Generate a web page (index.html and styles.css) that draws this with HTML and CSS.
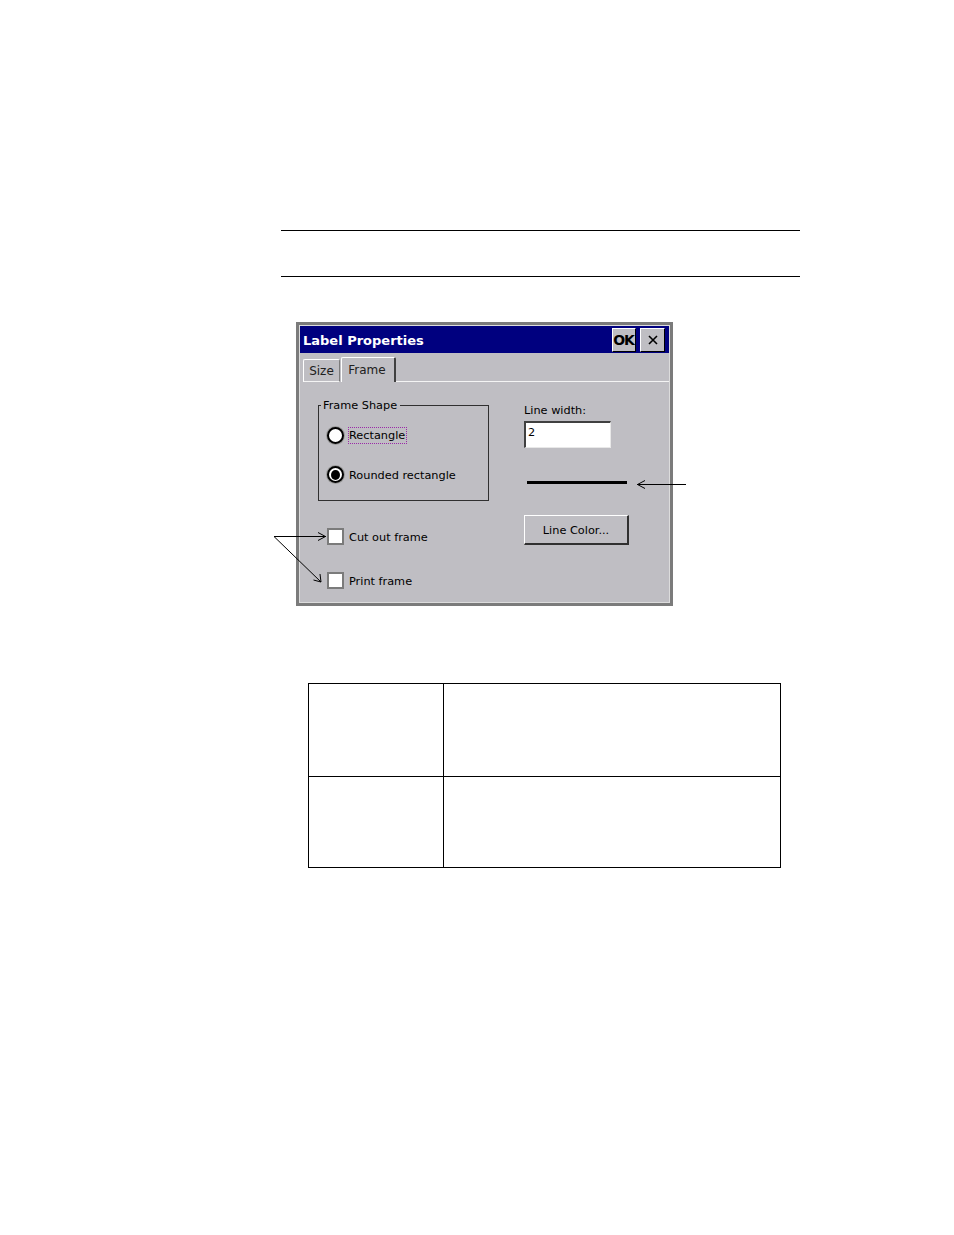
FILE: index.html
```html
<!DOCTYPE html>
<html>
<head>
<meta charset="utf-8">
<link rel="stylesheet" href="styles.css">
</head>
<body>
<div class="page">
  <div class="rule rule-top"></div>
  <div class="rule rule-bottom"></div>

  <div class="dialog">
    <div class="titlebar">
      <span class="title">Label Properties</span>
      <span class="tbtn ok">OK</span>
      <span class="tbtn close">
        <svg width="12" height="12" viewBox="0 0 12 12"><path d="M2 2 L10 10 M10 2 L2 10" stroke="#000" stroke-width="1.6" fill="none"/></svg>
      </span>
    </div>
    <div class="tabs">
      <span class="tab">Size</span>
      <span class="tab active">Frame</span>
      <span class="tabfill"></span>
    </div>
    <div class="panel">
      <div class="leftcol">
        <div class="groupbox">
          <span class="legend">Frame Shape</span>
          <div class="optrow first">
            <span class="radio"></span>
            <span class="focus">Rectangle</span>
          </div>
          <div class="optrow second">
            <span class="radio checked"><span class="dot"></span></span>
            <span>Rounded rectangle</span>
          </div>
        </div>
        <div class="checkrow cut">
          <span class="checkbox"></span>
          <span>Cut out frame</span>
        </div>
        <div class="checkrow print">
          <span class="checkbox"></span>
          <span>Print frame</span>
        </div>
      </div>
      <div class="rightcol">
        <div class="lw-label">Line width:</div>
        <div class="input">2</div>
        <div class="preview"></div>
        <div class="button">Line Color...</div>
      </div>
    </div>
  </div>

  <table class="info">
    <tr class="r1"><td class="c1"></td><td class="c2"></td></tr>
    <tr class="r2"><td class="c1"></td><td class="c2"></td></tr>
  </table>

  <svg class="annot" width="954" height="1235" viewBox="0 0 954 1235">
    <g stroke="#000" stroke-width="1" fill="none">
      <path d="M686 484.5 L637 484.5"/>
      <path d="M645 480.5 L637.5 484.5 L645 488.5"/>
      <path d="M274 536.5 L326 536.5"/>
      <path d="M318 532.5 L325.5 536.5 L318 540.5"/>
      <path d="M274 536.5 L321 582"/>
      <path d="M313.5 580 L321 582 L320 574"/>
    </g>
  </svg>
</div>
</body>
</html>
```
FILE: styles.css
```css
html, body {
  margin: 0;
  padding: 0;
  background: #ffffff;
}
.page {
  position: relative;
  width: 954px;
  height: 1235px;
  overflow: hidden;
  font-family: "DejaVu Sans", "Liberation Sans", sans-serif;
}
.rule {
  width: 519px;
  height: 1px;
  background: #000;
  margin-left: 281px;
}
.rule-top {
  margin-top: 230px;
}
.rule-bottom {
  margin-top: 45px;
}

/* dialog */
.dialog {
  width: 377px;
  height: 284px;
  box-sizing: border-box;
  margin: 45px 0 0 296px;
  border: 3px solid #7b7b7b;
  padding: 1px;
  background: #bfbec3;
  box-shadow: inset 0 0 0 1px #dcdcdc;
  display: flex;
  flex-direction: column;
  font-size: 11.3px;
  color: #000;
}
.titlebar {
  height: 27px;
  background: #00007f;
  display: flex;
  align-items: center;
  padding: 0 4px 0 3px;
  gap: 4px;
}
.title {
  flex: 1;
  color: #fff;
  font-weight: bold;
  font-size: 13px;
  padding-top: 2px;
}
.tbtn {
  width: 24px;
  height: 24px;
  box-sizing: border-box;
  background: #bfbec3;
  border-top: 1px solid #fff;
  border-left: 1px solid #fff;
  border-right: 1px solid #000;
  border-bottom: 1px solid #000;
  display: flex;
  align-items: center;
  justify-content: center;
}
.tbtn.ok {
  font-weight: bold;
  font-size: 14px;
  letter-spacing: -1px;
  padding-right: 1px;
}
.tbtn.close {
  width: 25px;
}

.tabs {
  height: 29px;
  display: flex;
  align-items: flex-end;
  padding-left: 3px;
}
.tab {
  box-sizing: border-box;
  height: 23px;
  width: 37px;
  border-top: 1px solid #fff;
  border-left: 1px solid #fff;
  border-right: 1px solid #7b7b7b;
  border-bottom: 1px solid #f4f4f4;
  border-radius: 2px 2px 0 0;
  display: flex;
  align-items: center;
  justify-content: center;
  font-size: 12px;
  color: #202020;
}
.tab.active {
  height: 25px;
  width: 55px;
  margin-left: 1px;
  border-right: 2px solid #404040;
  border-bottom: none;
  padding-right: 2px;
}
.tabfill {
  flex: 1;
  height: 0;
  border-bottom: 1px solid #f4f4f4;
}

.panel {
  flex: 1;
  display: grid;
  grid-template-columns: 206px 1fr;
  padding-left: 18px;
}
.leftcol {
  display: flex;
  flex-direction: column;
}
.groupbox {
  margin-top: 23px;
  width: 171px;
  height: 96px;
  box-sizing: border-box;
  border: 1px solid #303030;
  display: flex;
  flex-direction: column;
}
.legend {
  align-self: flex-start;
  margin: -7px 0 0 2px;
  padding: 0 3px 0 2px;
  background: #bfbec3;
  line-height: 14px;
}
.optrow {
  display: flex;
  align-items: center;
  gap: 5px;
  padding-left: 8px;
  height: 17px;
}
.optrow.first {
  margin-top: 14px;
}
.optrow.second {
  margin-top: 22px;
}
.optrow span:last-child {
  padding-top: 1px;
}
.radio {
  width: 17px;
  height: 17px;
  box-sizing: border-box;
  border-radius: 50%;
  background: #fff;
  border: 2px solid #000;
  box-shadow: 0 0 0 1px #9a9a9a;
  display: flex;
  align-items: center;
  justify-content: center;
}
.radio .dot {
  padding: 0;
}
.dot {
  width: 9px;
  height: 9px;
  border-radius: 50%;
  background: #000;
}
.focus {
  border: 1px dotted #9a2aa8;
  padding: 1px 1px 1px 0;
  margin-left: -1px;
}
.checkrow {
  display: flex;
  align-items: center;
  gap: 5px;
  padding-left: 9px;
  height: 17px;
}
.checkrow span:last-child {
  padding-top: 2px;
}
.checkrow.cut {
  margin-top: 27px;
}
.checkrow.print {
  margin-top: 27px;
}
.checkbox {
  width: 17px;
  height: 17px;
  box-sizing: border-box;
  background: #fff;
  border: 2px solid #7b7b7b;
}

.rightcol {
  display: flex;
  flex-direction: column;
  align-items: flex-start;
}
.lw-label {
  margin-top: 22px;
  line-height: 14px;
}
.input {
  margin-top: 3px;
  width: 87px;
  height: 27px;
  box-sizing: border-box;
  background: #fff;
  border-top: 2px solid #404040;
  border-left: 2px solid #404040;
  border-right: 1px solid #e8e8e8;
  border-bottom: 1px solid #e8e8e8;
  padding: 3px 0 0 2px;
  line-height: 14px;
}
.preview {
  margin: 33px 0 0 3px;
  width: 100px;
  height: 3px;
  background: #000;
}
.button {
  margin-top: 31px;
  width: 105px;
  height: 30px;
  box-sizing: border-box;
  border-top: 1px solid #fff;
  border-left: 1px solid #fff;
  border-right: 2px solid #303030;
  border-bottom: 2px solid #303030;
  display: flex;
  align-items: center;
  justify-content: center;
  padding-top: 2px;
}

/* table */
.info {
  border-collapse: collapse;
  margin: 77px 0 0 308px;
  width: 473px;
}
.info td {
  border: 1.5px solid #000;
  padding: 0;
}
.info .c1 {
  width: 134px;
}
.info .r1 {
  height: 93px;
}
.info .r2 {
  height: 91px;
}

.annot {
  position: absolute;
  left: 0;
  top: 0;
  pointer-events: none;
}
```
